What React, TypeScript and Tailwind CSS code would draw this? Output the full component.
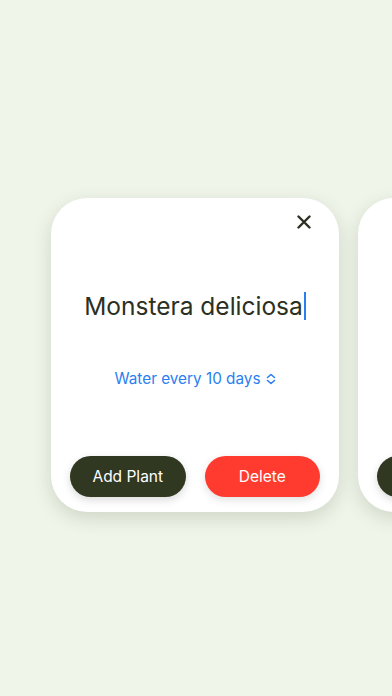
import React from "react";

const CloseIcon = () => (
  <svg width="14" height="14" viewBox="0 0 14 14" fill="none">
    <path d="M1.5 1.5L12.5 12.5M12.5 1.5L1.5 12.5" stroke="#2b3022" strokeWidth="2.4" strokeLinecap="round" />
  </svg>
);

const Chevrons = () => (
  <svg width="10" height="12" viewBox="0 0 10 12" fill="none">
    <path d="M1.5 4.5L5 1.5L8.5 4.5M1.5 7.5L5 10.5L8.5 7.5" stroke="#2b7ef0" strokeWidth="1.6" strokeLinecap="round" strokeLinejoin="round" />
  </svg>
);

const PlantCard = ({ name, days }: { name: string; days: number }) => {
  return (
    <div className="flex h-[314px] w-[288px] shrink-0 flex-col rounded-[36px] bg-white px-[19px] pb-[15px] shadow-[0_6px_18px_rgba(60,80,50,0.18)]">
      <div className="flex justify-end pt-[17px] pr-[9px]">
        <div className="flex h-[14px] w-[14px] items-center justify-center">
          <CloseIcon />
        </div>
      </div>
      <div className="mt-[62px] flex items-center justify-center">
        <span className="text-[24.5px] leading-[30px] text-[#2b3022]">{name}</span>
        <span className="ml-[1px] h-[28px] w-[2px] bg-[#2b7ef0]" />
      </div>
      <div className="mt-[47px] flex items-center justify-center gap-[5px] text-[15.3px] text-[#2b7ef0]">
        <span>Water every {days} days</span>
        <Chevrons />
      </div>
      <div className="mt-auto flex gap-[19px]">
        <button className="h-[41px] flex-1 rounded-full bg-[#303821] text-[15.5px] text-white shadow-[0_3px_8px_rgba(0,0,0,0.15)]">
          Add Plant
        </button>
        <button className="h-[41px] flex-1 rounded-full bg-[#ff3b30] text-[15.5px] text-white shadow-[0_3px_8px_rgba(0,0,0,0.12)]">
          Delete
        </button>
      </div>
    </div>
  );
};

const App = () => {
  return (
    <div className="h-[696px] w-[392px] overflow-hidden bg-[#eff5e9] font-['Inter',sans-serif]">
      <div className="flex gap-[19px] pl-[51px] pt-[198px]">
        <PlantCard name="Monstera deliciosa" days={10} />
        <PlantCard name="Monstera deliciosa" days={10} />
      </div>
    </div>
  );
};

export default App;
